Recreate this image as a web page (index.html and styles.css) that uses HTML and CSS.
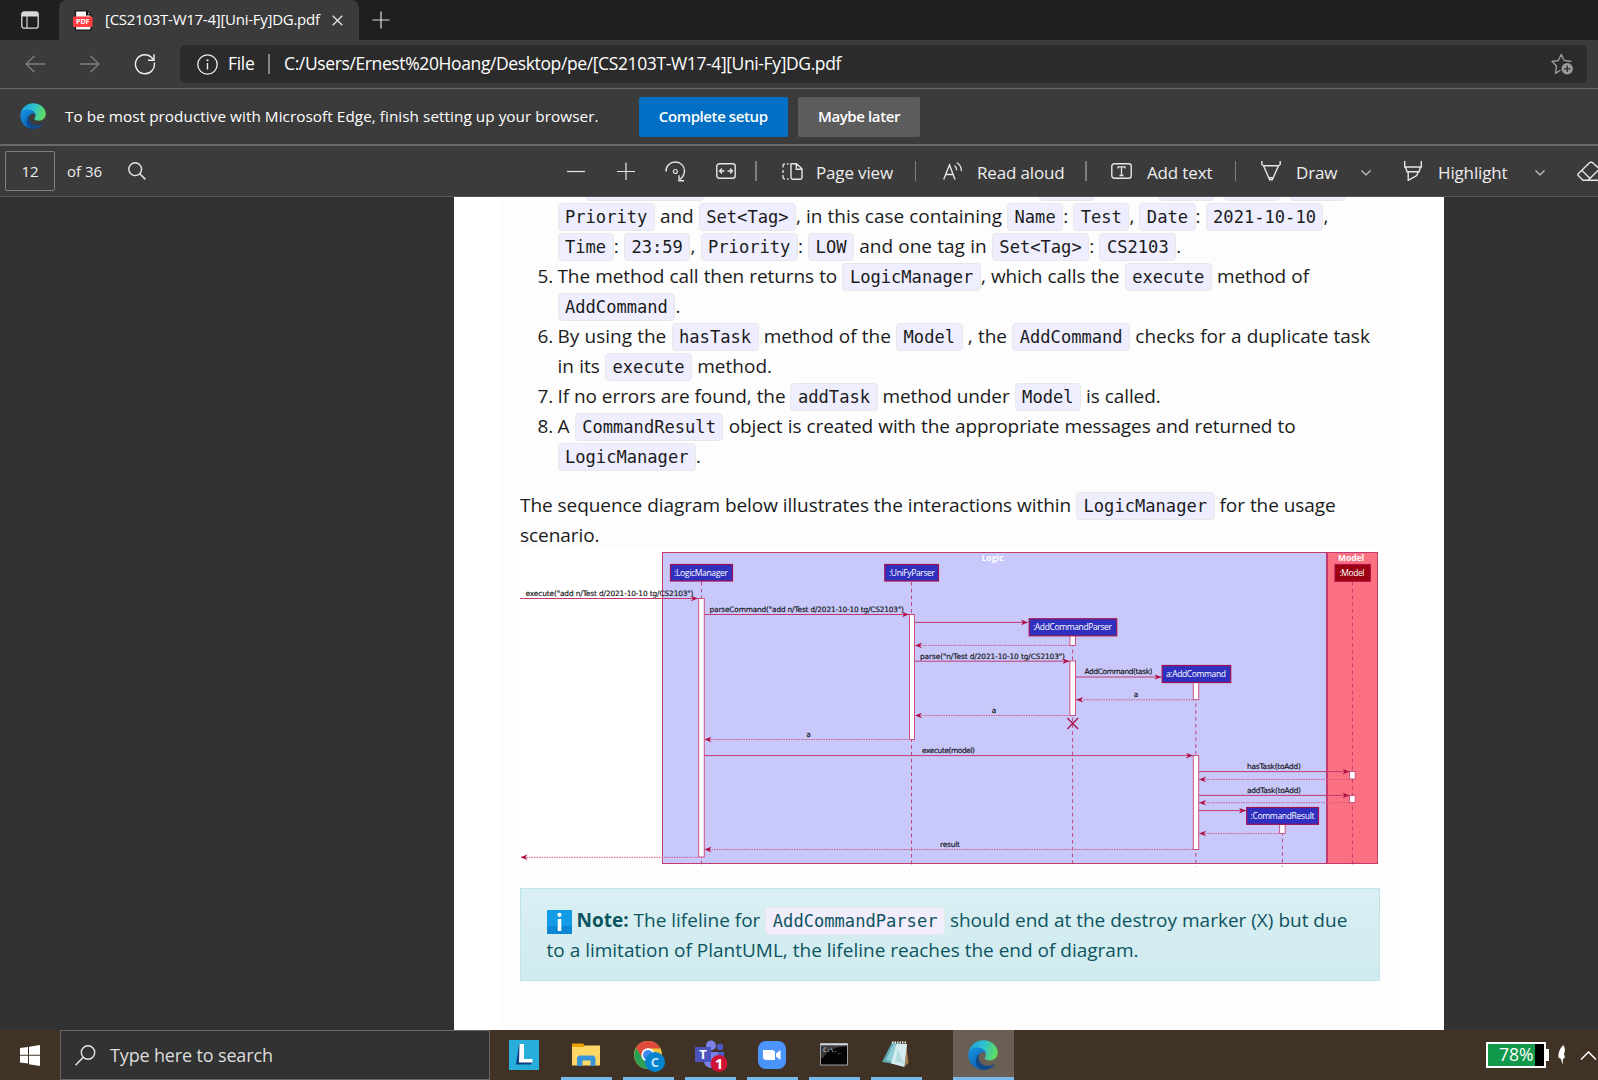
FILE: index.html
```html
<!DOCTYPE html>
<html lang="en">
<head>
<meta charset="utf-8">
<title>[CS2103T-W17-4][Uni-Fy]DG.pdf</title>
<link rel="stylesheet" href="styles.css">
</head>
<body>
<svg class="defs" width="0" height="0">
  <defs>
    <linearGradient id="edgeTop" x1="0" y1="0.3" x2="1" y2="0.5"><stop offset="0" stop-color="#1b9fdc"/><stop offset=".5" stop-color="#2fc2cf"/><stop offset="1" stop-color="#63dc58"/></linearGradient>
    <linearGradient id="edgeMid" x1="0" y1="0" x2="0.6" y2="1"><stop offset="0" stop-color="#1793e0"/><stop offset="1" stop-color="#0b62b8"/></linearGradient>
    <symbol id="edge" viewBox="0 0 30 30">
      <path d="M.6 12.500C2 5.300 8 .2 15 .2c9 0 14.800 6 14.800 12.300 0 5-3.800 7.900-7.900 7.900-3.700 0-5.300-1.300-5.300-2.300 0-.8 1.200-1.400 1.200-3.700C17.800 11 14.600 8.500 10 8.500c-4 0-7.400 1.600-9.400 4z" fill="url(#edgeTop)"/>
      <path d="M.3 15C.3 10.500 4.500 7.600 9.300 7.600c5 0 8.500 3 8.500 6.400-1-1.600-2.600-2.200-4.300-1.600-3.500 1.500-4.200 5.600-2.600 9.200 1.500 3.800 4.300 6.900 8.100 7.700A14.800 14.800 0 0 1 .3 15z" fill="url(#edgeMid)"/>
      <path d="M12 13.200c-3 4-1.500 10.800 5.500 12.300 4.200.7 7.800-.5 10-1.800-2.600 4.100-7.200 6.300-12.500 6.100C8.300 28.500 6 22 8.600 17c.8-1.700 2-3 3.400-3.800z" fill="#114a8b"/>
    </symbol>
    <marker id="arrow" viewBox="0 0 7 6" refX="7" refY="3" markerWidth="7" markerHeight="6" orient="auto" markerUnits="userSpaceOnUse"><path d="M0 .2 7 3 0 5.800 2 3z" fill="#b01048"/></marker>
  </defs>
</svg>

<div class="window">
  <header class="tabs">
    <div class="tab-menu"><svg width="18" height="18" viewBox="0 0 18 18"><rect x=".8" y=".8" width="16.400" height="16.400" rx="2.500" fill="none" stroke="#d8d8d8" stroke-width="1.300"/><path d="M1 1h16v4.500H1z" fill="#d8d8d8"/><path d="M6 5v12" stroke="#d8d8d8" stroke-width="1.200"/></svg></div>
    <div class="tab">
      <svg width="20" height="21" viewBox="0 0 20 21"><path d="M2.500.8h11L18 5v15H2.500z" fill="#f6f6f6" stroke="#111" stroke-width="1.200"/><path d="M13 0v5.500h6z" fill="#111"/><path d="M15 2.500v1.800h2z" fill="#ddd"/><rect x="0" y="6.500" width="19.500" height="10.500" rx="1" fill="#ff3f42"/><text x="9.700" y="14.300" text-anchor="middle" class="pdf-mark">PDF</text></svg>
      <span class="tab-title">[CS2103T-W17-4][Uni-Fy]DG.pdf</span>
      <svg class="tab-close" width="11" height="11" viewBox="0 0 11 11"><path d="M.7.7l9.600 9.600M10.300.7.700 10.300" stroke="#e4e4e4" stroke-width="1.300"/></svg>
    </div>
    <svg class="tab-new" width="18" height="18" viewBox="0 0 18 18"><path d="M9 .5v17M.5 9h17" stroke="#dcdcdc" stroke-width="1.200"/></svg>
  </header>

  <nav class="nav">
    <svg width="20" height="18" viewBox="0 0 20 18"><path d="M9.500.7 1.200 9l8.300 8.300M1.200 9H20" fill="none" stroke="#7f7f7f" stroke-width="1.300"/></svg>
    <svg width="20" height="18" viewBox="0 0 20 18"><path d="M10.500.7 18.800 9l-8.300 8.300M18.800 9H0" fill="none" stroke="#7f7f7f" stroke-width="1.300"/></svg>
    <svg class="reload" width="22" height="22" viewBox="0 0 22 22"><path d="M20.300 9.500A9.500 9.500 0 1 1 17 3.900l2.800 2.800" fill="none" stroke="#f0f0f0" stroke-width="1.400"/><path d="M20 1.200v6h-6" fill="none" stroke="#f0f0f0" stroke-width="1.400"/></svg>
    <div class="address">
      <svg width="21" height="21" viewBox="0 0 21 21"><circle cx="10.500" cy="10.500" r="9.700" fill="none" stroke="#efefef" stroke-width="1.300"/><path d="M10.500 9v6.500" stroke="#efefef" stroke-width="1.400"/><circle cx="10.500" cy="6.200" r="1" fill="#efefef"/></svg>
      <span class="scheme">File</span>
      <i class="address-rule"></i>
      <span class="url">C:/Users/Ernest%20Hoang/Desktop/pe/[CS2103T-W17-4][Uni-Fy]DG.pdf</span>
      <svg class="star" width="23" height="22" viewBox="0 0 23 22"><path d="M9.500 17 4.500 20.300 5.500 13 1 8.500l6.300-1L10.200 1.500l3 6 7.300 1" fill="none" stroke="#9a9a9a" stroke-width="1.400" stroke-linejoin="round"/><circle cx="16.200" cy="15.800" r="5.700" fill="#9a9a9a"/><path d="M16.200 12.500v6.600M12.900 15.800h6.600" stroke="#2b2b2b" stroke-width="1.300"/></svg>
    </div>
  </nav>

  <section class="setup">
    <svg width="26" height="26"><use href="#edge"/></svg>
    <span class="setup-text">To be most productive with Microsoft Edge, finish setting up your browser.</span>
    <button class="btn primary">Complete setup</button>
    <button class="btn">Maybe later</button>
  </section>

  <section class="tools">
    <span class="page-no">12</span>
    <span class="page-count">of 36</span>
    <span><svg width="18" height="18" viewBox="0 0 18 18"><circle cx="7.200" cy="7.200" r="6.400" fill="none" stroke="#e6e6e6" stroke-width="1.400"/><path d="M11.800 11.800l5.600 5.600" stroke="#e6e6e6" stroke-width="1.500"/></svg></span>
    <span><svg width="18" height="18" viewBox="0 0 18 18"><path d="M0 9.500h18" stroke="#e6e6e6" stroke-width="1.200"/></svg></span>
    <span><svg width="18" height="18" viewBox="0 0 18 18"><path d="M0 9.500h18M9 .5v18" stroke="#e6e6e6" stroke-width="1.200"/></svg></span>
    <span><svg width="21" height="21" viewBox="0 0 21 21"><path d="M1 10.500C.8 5 5 1 10.200 1c5.500 0 9.300 4 9.300 9 0 3.600-1.700 6-4.500 8.500M19 19.800h-5v-5.600" fill="none" stroke="#e6e6e6" stroke-width="1.400"/><circle cx="10.300" cy="10.500" r="2" fill="none" stroke="#e6e6e6" stroke-width="1.200"/></svg></span>
    <span><svg width="20" height="16" viewBox="0 0 20 16"><rect x=".8" y=".8" width="18.400" height="14.400" rx="2.500" fill="none" stroke="#e6e6e6" stroke-width="1.400"/><path d="M8.500 8H4M6 5.500 3.500 8 6 10.500M11.500 8H16M14 5.500 16.500 8 14 10.500" fill="none" stroke="#e6e6e6" stroke-width="1.300"/></svg></span>
    <i class="rule wide"></i>
    <span><svg width="21" height="17" viewBox="0 0 21 17"><path d="M6.500 1H4.800M3 1C1.500 1 1 1.800 1 3v1.500M1 7v3M1 12v1.500C1 15.300 1.700 16 3 16M5 16h1.500" fill="none" stroke="#e6e6e6" stroke-width="1.300"/><path d="M9 .8h5.500l5.500 5V14.500c0 1.100-.6 1.700-1.700 1.700H10.500c-1 0-1.500-.6-1.500-1.600zM14.300 1v5.200H20" fill="none" stroke="#e6e6e6" stroke-width="1.400"/></svg></span>
    <span class="label">Page view</span>
    <i class="rule"></i>
    <span><svg width="20" height="18" viewBox="0 0 20 18"><path d="M.7 17.500 6.500 3 12 17.500M2.700 12.500h7.600" fill="none" stroke="#e6e6e6" stroke-width="1.400"/><path d="M11.500 3.500c1.500 1 2.200 2.600 2.200 4.700M13.800.7c3 1.700 4.500 4.400 4.700 8.300" fill="none" stroke="#e6e6e6" stroke-width="1.300"/></svg></span>
    <span class="label">Read aloud</span>
    <i class="rule wide"></i>
    <span><svg width="21" height="16" viewBox="0 0 21 16"><rect x=".8" y=".8" width="19.400" height="14.400" rx="2.500" fill="none" stroke="#e6e6e6" stroke-width="1.400"/><path d="M7 5.500V3.800h7v1.700M10.500 3.800v8.700M8.500 12.500h4" fill="none" stroke="#e6e6e6" stroke-width="1.300"/></svg></span>
    <span class="label">Add text</span>
    <i class="rule"></i>
    <span><svg width="20" height="20" viewBox="0 0 20 20"><path d="M.8 0v3.500l1.700 1.200h15l1.700-1.200V0M2.500 4.700 8.700 18.800h2.600l6.200-14.100M8 16.800h4" fill="none" stroke="#e6e6e6" stroke-width="1.400"/></svg></span>
    <span class="label">Draw</span>
    <span class="chev"><svg width="10" height="6" viewBox="0 0 10 6"><path d="M.5.5 5 5 9.500.5" fill="none" stroke="#c8c8c8" stroke-width="1.200"/></svg></span>
    <span><svg width="18" height="20" viewBox="0 0 18 20"><path d="M.7 0v6h16.600V0M1.500 6l1.500 4.800h12L16.500 6M4.200 11v8.300l8.500-4.800 1.500-3.500" fill="none" stroke="#e6e6e6" stroke-width="1.400"/></svg></span>
    <span class="label">Highlight</span>
    <span class="chev"><svg width="10" height="6" viewBox="0 0 10 6"><path d="M.5.5 5 5 9.500.5" fill="none" stroke="#c8c8c8" stroke-width="1.200"/></svg></span>
    <span><svg width="24" height="21" viewBox="0 0 24 21"><path d="M13 1.200 1.500 12.500c-.8.800-.8 1.500 0 2.300l4.500 4.500h5L22 8.500M5 9.500l8 8M10 19.300h14M13 1.200h2l8 7" fill="none" stroke="#e6e6e6" stroke-width="1.400"/></svg></span>
  </section>

  <main class="viewer">
    <article class="sheet">
      <div class="sheet-body">
        <ol class="steps">
          <li class="line">An <code>AddCommand</code> by its own class when creating a new <code>Task</code> with a <code>Name</code>, <code>Date</code>, <code>Time</code></li>
          <li class="line w1"><code>Priority</code> and <code>Set&lt;Tag&gt;</code>, in this case containing <code>Name</code>: <code>Test</code>, <code>Date</code>: <code>2021-10-10</code>,</li>
          <li class="line w2"><code>Time</code>: <code>23:59</code>, <code>Priority</code>: <code>LOW</code> and one tag in <code>Set&lt;Tag&gt;</code>: <code>CS2103</code>.</li>
          <li class="line w3"><b class="num">5.</b>The method call then returns to <code>LogicManager</code>, which calls the <code>execute</code> method of</li>
          <li class="line"><code>AddCommand</code>.</li>
          <li class="line w4"><b class="num">6.</b>By using the <code>hasTask</code> method of the <code>Model</code> , the <code>AddCommand</code> checks for a duplicate task</li>
          <li class="line w4">in its <code>execute</code> method.</li>
          <li class="line w6"><b class="num">7.</b>If no errors are found, the <code>addTask</code> method under <code>Model</code> is called.</li>
          <li class="line w7"><b class="num">8.</b>A <code>CommandResult</code> object is created with the appropriate messages and returned to</li>
          <li class="line"><code>LogicManager</code>.</li>
        </ol>
        <p class="intro"><span class="line w8">The sequence diagram below illustrates the interactions within <code>LogicManager</code> for the usage</span><span class="line w8">scenario.</span></p>

        <svg class="diagram" width="860" height="321" viewBox="520 549 860 321">
          <rect x="520" y="549" width="860" height="321" fill="#fff"/>
          <g stroke="#c23a6e" stroke-width="1">
            <rect x="662.500" y="552.500" width="664" height="311" fill="#c8c8fa"/>
            <rect x="1327.500" y="552.500" width="50" height="311" fill="#fb7182"/>
          </g>
          <g class="life">
            <path d="M701.500 582V867M911.500 582V867M1072.600 636V867M1195.800 683V867M1282.400 825V867M1352.400 582V867"/>
          </g>
          <g fill="#fff" stroke="#cb5480" stroke-width="1">
            <rect x="698.700" y="598.500" width="5.600" height="258.500"/>
            <rect x="909.500" y="614.500" width="5" height="125"/>
            <rect x="1069.900" y="635" width="5.600" height="10.500"/>
            <rect x="1069.900" y="661" width="5.600" height="54.500"/>
            <rect x="1193.300" y="682" width="5.400" height="17.700"/>
            <rect x="1193.300" y="755.500" width="5.400" height="94"/>
            <rect x="1279.600" y="824" width="5.600" height="9.500"/>
            <rect x="1349.600" y="771.500" width="5.600" height="7.500"/>
            <rect x="1349.600" y="795.500" width="5.600" height="7"/>
          </g>
          <g class="call">
            <path d="M520 598.500H698"/><path d="M704.500 614.500H909"/><path d="M915 622.400H1028"/><path d="M915 661.200H1069.500"/><path d="M1075.800 677H1161.500"/><path d="M704.500 755.600H1193"/><path d="M1199 771.600H1349.500"/><path d="M1199 795.400H1349.500"/><path d="M1199 810.600H1246"/>
          </g>
          <g class="call ret">
            <path d="M1072 645.400H915"/><path d="M1195 699.800H1076"/><path d="M1070 715.500H915"/><path d="M910 739.500H704.500"/><path d="M1350 779.400H1199"/><path d="M1350 802.700H1199"/><path d="M1282 833.500H1199"/><path d="M1193 849.500H704.500"/><path d="M698 857.300H520.500"/>
          </g>
          <path d="M1067.300 718l10.800 11M1078.100 718l-10.800 11" stroke="#b01048" stroke-width="1.300"/>
          <g fill="#3030c0" stroke="#a01050" stroke-width="1.200">
            <rect x="670.500" y="564.500" width="62" height="16.500"/><rect x="884.800" y="564.500" width="53.700" height="16.500"/><rect x="1029.200" y="618.800" width="87.500" height="17"/><rect x="1162.200" y="665.500" width="68.500" height="17"/><rect x="1246.700" y="807.500" width="71.800" height="16.800"/>
            <rect x="1335" y="564.500" width="35.300" height="16.800" fill="#9c0010" stroke="#b01048"/>
          </g>
          <g class="head">
            <text x="674" y="575.500" textLength="54">:LogicManager</text><text x="889" y="575.500" textLength="46">:UniFyParser</text><text x="1033" y="630" textLength="79">:AddCommandParser</text><text x="1166" y="676.500" textLength="60">a:AddCommand</text><text x="1250.500" y="818.700" textLength="64">:CommandResult</text><text x="1339.500" y="575.500" textLength="25">:Model</text>
            <text x="981.500" y="560.500" textLength="22" class="strong">Logic</text><text x="1338" y="560.500" textLength="26" class="strong">Model</text>
          </g>
          <g class="msg">
            <text x="525.500" y="595.800" textLength="168">execute("add n/Test d/2021-10-10 tg/CS2103")</text>
            <text x="709.500" y="611.700" textLength="194.500">parseCommand("add n/Test d/2021-10-10 tg/CS2103")</text>
            <text x="920" y="658.500" textLength="145">parse("n/Test d/2021-10-10 tg/CS2103")</text>
            <text x="1084.500" y="674.300" textLength="68">AddCommand(task)</text>
            <text x="1133.700" y="697">a</text><text x="991.700" y="712.800">a</text><text x="806.200" y="736.800">a</text>
            <text x="922" y="753" textLength="53">execute(model)</text>
            <text x="1247" y="769" textLength="54">hasTask(toAdd)</text>
            <text x="1247" y="792.700" textLength="54">addTask(toAdd)</text>
            <text x="940" y="846.800" textLength="20">result</text>
          </g>
        </svg>

        <aside class="note">
          <span class="line"><svg class="info" width="25" height="24" viewBox="0 0 25 24"><rect width="25" height="24" rx="1" fill="#129be6"/><path d="M0 16h25v8H0z" fill="#0a86d6"/><circle cx="12.500" cy="4.800" r="2.100" fill="#fff"/><path d="M10.700 9h3.600v12h-3.600z" fill="#fff"/></svg><b>Note:</b> The lifeline for <code>AddCommandParser</code> should end at the destroy marker (X) but due</span>
          <span class="line">to a limitation of PlantUML, the lifeline reaches the end of diagram.</span>
        </aside>
      </div>
    </article>
  </main>

  <footer class="taskbar">
    <div class="start"><svg width="20" height="21" viewBox="0 0 20 21"><path d="M0 3 8 1.900V9.700H0zM9 1.700 20 0v9.700H9zM0 10.800h8v7.800L0 17.500zM9 10.800h11V21L9 19.200z" fill="#fff"/></svg></div>
    <div class="search"><svg width="21" height="21" viewBox="0 0 21 21"><circle cx="13" cy="7.500" r="6.700" fill="none" stroke="#e8e8e8" stroke-width="1.400"/><path d="M8 12.500.5 20.300" stroke="#e8e8e8" stroke-width="1.500"/></svg><span>Type here to search</span></div>
    <div class="apps">
      <div class="app idle"><svg width="30" height="30" viewBox="0 0 30 30"><path d="M0 0h30v30H0z" fill="#27aedb"/><path d="M10 4.500 7 24.500h15l1.500-3.500H13.500V4z" fill="#0c3d80"/><path d="M10.500 4H15v15h8.500v3.500H10z" fill="#fff"/></svg></div>
      <div class="app"><svg width="30" height="30" viewBox="0 0 30 30"><path d="M1 3.500h11l2 2.200V9H1z" fill="#e8a200"/><path d="M1 7h11.500l2-1.500H29v20H1z" fill="#ffd767"/><path d="M6 26v-8.500l2-2h14.500l2 2V26h-5v-5.500h-8V26z" fill="#3a95d8"/></svg></div>
      <div class="app"><svg class="chrome" width="32" height="32" viewBox="0 0 32 32"><circle cx="15" cy="15" r="14" fill="#f8c53a"/><path d="M3 8A14 14 0 0 1 27.500 8.500H15L8.500 17z" fill="#df4a3c"/><path d="M3 8A14 14 0 0 0 14 29l5-9-10-3z" fill="#2b9f55"/><circle cx="15" cy="15" r="6.700" fill="#fff"/><circle cx="15" cy="15" r="5" fill="#4287ed"/><circle cx="22" cy="22" r="10" fill="#0484cc"/><text x="22" y="26.500" text-anchor="middle" class="badge-c">C</text></svg></div>
      <div class="app"><svg class="teams" width="34" height="32" viewBox="0 0 34 32"><circle cx="17" cy="5.500" r="5" fill="#7b83eb"/><circle cx="26" cy="7" r="3.300" fill="#5059c9"/><path d="M10 12h15v10c0 4-3 6-7 6-5 0-8-3-8-7z" fill="#7b83eb"/><path d="M24 12h6v9h-6z" fill="#5059c9"/><path d="M1 7h16v15H1z" fill="#4b53bc"/><text x="9" y="19" text-anchor="middle" class="teams-t">T</text><circle cx="25" cy="23.500" r="8.400" fill="#cf1433"/><text x="25" y="29" text-anchor="middle" class="badge-1">1</text></svg></div>
      <div class="app"><svg width="30" height="30" viewBox="0 0 30 30"><rect x="1" y="1" width="28" height="28" rx="8" fill="#4a94fb"/><path d="M6 10h9c2 0 3 1 3 3v7H9c-2 0-3-1-3-3z" fill="#fff"/><path d="m19 13.500 4.500-3.500v10L19 16.500z" fill="#fff"/></svg></div>
      <div class="app"><svg width="30" height="30" viewBox="0 0 30 30"><rect x="1.500" y="3.500" width="27" height="21.500" fill="#050505" stroke="#9aa0a5"/><path d="M1.500 3.500h27v2h-27z" fill="#cfd4d8"/><path d="M2 6h26c-8 1-20 3-24 12H2z" fill="#3a3a3a"/><text x="4" y="12" class="prompt">C:\._</text></svg></div>
      <div class="app"><svg width="30" height="30" viewBox="0 0 30 30"><path d="M25 3l2.500 20-3.500 3z" fill="#a08050"/><path d="M11 2.500 1 22l13 2L22 4z" fill="#5fa9b5"/><path d="M12.500 4 5 20l9 3 5-18z" fill="#8fccd4"/><path d="M15.500 4 26 4 23.500 27 10 23.500z" fill="#d5ecef"/><path d="M17 9 14 21l9 3z" fill="#b4dde3"/><path d="M11 2.500h15" stroke="#e8eef0" stroke-width="1.800" stroke-dasharray="1.500 1"/></svg></div>
      <div class="app active"><svg width="30" height="30"><use href="#edge"/></svg></div>
    </div>
    <div class="tray">
      <div class="battery">78%</div><i class="nub"></i>
      <svg width="12" height="20" viewBox="0 0 12 20"><path d="M7.500 0C9 3 9.500 6 8 9l1 3.500-2 1.500-.5 6-1.500-6-2.500-1.500C2 8 4 3 7.500 0z" fill="#fff"/></svg>
      <svg width="17" height="9" viewBox="0 0 17 9"><path d="M1 8.500 8.500 1l7.500 7.500" fill="none" stroke="#fff" stroke-width="1.500"/></svg>
    </div>
  </footer>
</div>
</body>
</html>
```
FILE: styles.css
```css
* { box-sizing: border-box; }
body { margin: 0; background: #323232; font-family: "Open Sans", "Noto Sans", sans-serif; color: #fff; }
svg { display: block; flex: none; }
.defs { position: absolute; }
.window { width: 1598px; height: 1080px; overflow: hidden; display: flex; flex-direction: column; }

.tabs { height: 40px; flex: none; background: #1f1f1f; display: flex; align-items: center; }
.tab-menu { width: 59px; padding-left: 21px; }
.tab { width: 300px; height: 40px; background: #3b3b3b; border-radius: 8px 8px 0 0; display: flex; align-items: center; padding-left: 14px; }
.tab-title { width: 238px; padding: 0 0 2px 12px; font-size: 15px; letter-spacing: -.26px; white-space: nowrap; }
.tab-close { margin-left: 1px; }
.tab-new { margin-left: 13px; }
.pdf-mark { font: 700 7px "Open Sans", sans-serif; fill: #fff; }

.nav { height: 49px; flex: none; background: #3b3b3b; border-bottom: 1px solid #6a6a6a; display: grid; grid-template-columns: 20px 20px 22px 1395px; column-gap: 35px; padding-left: 25px; align-items: center; }
.nav > svg { margin-top: -1px; }
.reload { margin-left: -1px; }
.address { margin-left: -12px; height: 38px; border-radius: 5px; background: #2b2b2b; display: flex; align-items: center; padding: 0 13px 0 17px; font-size: 17.500px; white-space: nowrap; }
.scheme { width: 40px; margin-left: 10px; padding-bottom: 2px; letter-spacing: -.3px; }
.address-rule { width: 2px; height: 20px; background: #858585; }
.url { margin-left: 14px; padding-bottom: 2px; letter-spacing: -.38px; }
.star { margin-left: auto; }

.setup { height: 57px; flex: none; background: #3b3b3b; border-bottom: 2px solid #6a6a6a; display: flex; align-items: center; padding-left: 20px; font-size: 15.300px; letter-spacing: .05px; }
.setup > svg { margin: -1px 0 0; }
.setup-text { width: 593px; padding: 0 0 2px 19px; white-space: nowrap; }
.btn { width: 122px; height: 40px; border: 0; border-radius: 2px; background: #5c5c5c; color: #fff; font: 600 15px "Open Sans", sans-serif; letter-spacing: -.4px; padding: 0 0 2px; white-space: nowrap; }
.btn.primary { width: 148.500px; margin-right: 10.500px; background: #006fc4; }

.tools { height: 51px; flex: none; background: #3b3b3b; border-bottom: 1px solid #555; padding-left: 5px; color: #eee; display: grid; align-items: center; white-space: nowrap;
  grid-template-columns: 62px 61px 438.500px 50px 48px 51px 39px 27px 34.500px 99px 28px 34px 108px 26px 36px 88px 26px 35px 65px 43px 34px 97px 42px 30px; }
.page-no { width: 50px; height: 40px; border: 1px solid #808080; border-radius: 2px; font-size: 15px; display: flex; align-items: center; justify-content: center; }
.page-count { font-size: 15px; }
.label { font-size: 17px; letter-spacing: -.15px; padding-top: 2px; }
.chev { padding-top: 3px; }
.rule { width: 1px; height: 20px; background: #7d7d7d; }
.rule.wide { width: 2px; }

.viewer { flex: 1; min-height: 0; background: #323232; display: flex; padding-left: 454px; overflow: hidden; }
.sheet { width: 990px; background: #fff; padding-left: 47px; }
.sheet-body { width: 898px; height: 833px; overflow: hidden; background: #fdfdfd; padding-left: 19px; color: #1b1b1b; font-size: 19px; }
.line { display: block; height: 30px; line-height: 30px; white-space: nowrap; }
.steps { list-style: none; margin: -26px 0 0; padding: 0 0 0 37.500px; }
.num { display: inline-block; width: 20px; margin-left: -20px; font-weight: 400; }
code { display: inline-block; height: 28px; vertical-align: top; margin-top: 2px; border: 1px solid #e8e8e8; border-radius: 4px; background: #eeeeff; padding: 0 6.500px; font: 17.100px/27px "DejaVu Sans Mono", monospace; letter-spacing: 0; word-spacing: 0; }
.w1 { word-spacing: .1px; }
.w2 { word-spacing: .3px; }
.w3 { letter-spacing: -.1px; word-spacing: .4px; }
.w4 { word-spacing: .28px; }
.w6 { letter-spacing: -.08px; word-spacing: .1px; }
.w7 { letter-spacing: -.1px; word-spacing: .4px; }
.w8 { letter-spacing: -.06px; word-spacing: .1px; }
.intro { margin: 19px 0 0; }
.diagram { margin-top: -1px; }
.note { margin-top: 18px; width: 860px; height: 93px; border: 1px solid #bee5eb; background: linear-gradient(#d9eff3, #d0ebef); padding: 16px 0 0 25.500px; color: #0c5460; }
.info { display: inline-block; vertical-align: top; margin-top: 5px; margin-right: 5px; }
.note code { color: #0c5460; background: #f1edfd; }

.life { fill: none; stroke: #b8306a; stroke-width: 1; stroke-dasharray: 3.600 3.200; opacity: .85; }
.call { fill: none; stroke: #c03a70; stroke-width: 1; }
.call path { marker-end: url(#arrow); }
.ret path { stroke-dasharray: 1.500 1; stroke: #cc5a88; }
.head { font: 8.500px "Open Sans", sans-serif; fill: #fff; }
.strong { font-weight: 700; }
.msg { font: 7.400px "DejaVu Sans", sans-serif; fill: #111; stroke: #111; stroke-width: .15px; }

.taskbar { height: 50px; flex: none; background: #403325; display: flex; }
.start { width: 60px; padding: 15px 0 0 20px; }
.search { width: 430px; border: 1px solid #666; background: #323232; display: flex; align-items: center; padding-left: 14px; gap: 14px; font-size: 18px; letter-spacing: -.15px; color: #ddd; white-space: nowrap; }
.apps { display: flex; gap: 11px; padding-left: 9px; }
.app { width: 51px; height: 50px; border-bottom: 3px solid #76b9ed; display: flex; justify-content: center; padding: 10px 2px 0 0; }
.app.idle { border-color: transparent; }
.app.active { width: 61px; margin-left: 20px; background: #6a5f54; }
.chrome, .teams { margin-left: 2px; }
.tray { width: 112px; margin-left: auto; overflow: hidden; display: flex; align-items: center; }
.battery { flex: none; width: 60px; height: 26px; border: 2px solid #fff; background: linear-gradient(90deg, #12984a 84%, #000 84%); font-size: 17.500px; line-height: 21px; padding-left: 11px; }
.nub { flex: none; width: 3px; height: 12px; margin-right: 7px; background: #fff; }
.tray svg + svg { margin-left: 12px; }
.badge-c { font: 700 13px "Open Sans", sans-serif; fill: #bfe6ff; }
.badge-1 { font: 700 15px "Open Sans", sans-serif; fill: #fff; }
.teams-t { font: 700 13px "Open Sans", sans-serif; fill: #fff; }
.prompt { font: 6px "DejaVu Sans Mono", monospace; fill: #ddd; }
```
